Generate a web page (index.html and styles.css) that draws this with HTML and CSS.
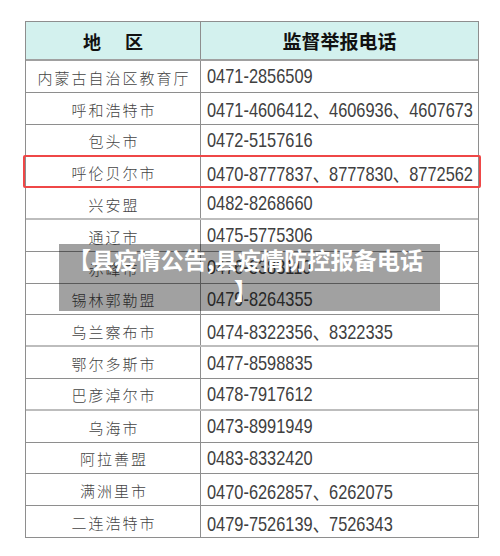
FILE: index.html
```html
<!DOCTYPE html>
<html lang="zh-CN">
<head>
<meta charset="utf-8">
<link rel="stylesheet" href="styles.css">
</head>
<body>
<div class="sheet">
  <div class="row head">
    <div class="cell area"><span class="h1">地　区</span></div>
    <div class="cell phone"><span class="h2">监督举报电话</span></div>
  </div>
  <div class="row"><div class="cell area">内蒙古自治区教育厅</div><div class="cell phone"><span class="num">0471-2856509</span></div></div>
  <div class="row"><div class="cell area">呼和浩特市</div><div class="cell phone"><span class="num">0471-4606412、4606936、4607673</span></div></div>
  <div class="row"><div class="cell area">包头市</div><div class="cell phone"><span class="num">0472-5157616</span></div></div>
  <div class="row mark"><div class="cell area">呼伦贝尔市</div><div class="cell phone"><span class="num">0470-8777837、8777830、8772562</span></div></div>
  <div class="row light"><div class="cell area">兴安盟</div><div class="cell phone"><span class="num">0482-8268660</span></div></div>
  <div class="row"><div class="cell area">通辽市</div><div class="cell phone"><span class="num">0475-5775306</span></div></div>
  <div class="row"><div class="cell area">赤峰市</div><div class="cell phone"><span class="num">0476-8383110</span></div></div>
  <div class="row"><div class="cell area">锡林郭勒盟</div><div class="cell phone"><span class="num">0479-8264355</span></div></div>
  <div class="row light"><div class="cell area">乌兰察布市</div><div class="cell phone"><span class="num">0474-8322356、8322335</span></div></div>
  <div class="row"><div class="cell area">鄂尔多斯市</div><div class="cell phone"><span class="num">0477-8598835</span></div></div>
  <div class="row light"><div class="cell area">巴彦淖尔市</div><div class="cell phone"><span class="num">0478-7917612</span></div></div>
  <div class="row"><div class="cell area">乌海市</div><div class="cell phone"><span class="num">0473-8991949</span></div></div>
  <div class="row"><div class="cell area">阿拉善盟</div><div class="cell phone"><span class="num">0483-8332420</span></div></div>
  <div class="row"><div class="cell area">满洲里市</div><div class="cell phone"><span class="num">0470-6262857、6262075</span></div></div>
  <div class="row last"><div class="cell area">二连浩特市</div><div class="cell phone"><span class="num">0479-7526139、7526343</span></div></div>
</div>
<div class="caption">【县疫情公告,县疫情防控报备电话<br>】</div>
</body>
</html>
```
FILE: styles.css
```css
html, body {
  margin: 0;
  padding: 0;
  background: #ffffff;
}
body {
  width: 500px;
  height: 556px;
  position: relative;
  overflow: hidden;
  font-family: "Noto Sans CJK SC", "Liberation Sans", sans-serif;
}
.sheet {
  margin: 21px 0 0 25px;
  width: 454px;
  box-sizing: border-box;
  border: 1px solid #8e8e8e;
  border-bottom: none;
  display: flex;
  flex-direction: column;
}
.row {
  display: grid;
  grid-template-columns: 175px 1fr;
  height: 31.8px;
  box-sizing: border-box;
  border-bottom: 1px solid #8e8e8e;
}
.row.light {
  border-bottom: 2px solid #bdbdbd;
}
.row.head {
  height: 39px;
  background: #d3f1ee;
  border-bottom: 2px solid #a0a0a0;
}
.cell {
  display: flex;
  align-items: center;
  min-width: 0;
}
.cell.area {
  justify-content: center;
  border-right: 1px solid #8e8e8e;
  font-size: 15px;
  font-weight: 300;
  letter-spacing: 2px;
  padding-left: 2px;
  color: #444;
  padding-top: 2px;
}
.cell.phone {
  padding-left: 6px;
}
.head .cell.area,
.head .cell.phone {
  justify-content: center;
  padding: 0;
}
.h1 {
  font-size: 18px;
  font-weight: 700;
  letter-spacing: 3px;
  padding-left: 3px;
  color: #111;
}
.h2 {
  font-size: 19px;
  font-weight: 700;
  color: #111;
}
.num {
  display: inline-block;
  font-family: "Liberation Sans", "Noto Sans CJK SC", sans-serif;
  font-size: 21px;
  color: #404040;
  white-space: nowrap;
  transform: scaleX(0.78);
  transform-origin: left center;
}
.row.mark {
  position: relative;
}
.row.mark::after {
  content: "";
  position: absolute;
  left: -3px;
  right: -3px;
  top: -1px;
  bottom: -1px;
  border: 2px solid #ef4747;
  border-radius: 2px;
}
.caption {
  position: absolute;
  left: 59px;
  top: 244px;
  width: 381px;
  height: 67px;
  box-sizing: border-box;
  padding: 0 10px 0 2px;
  background: rgba(0, 0, 0, 0.37);
  color: #ffffff;
  font-size: 23.2px;
  font-weight: 700;
  line-height: 31px;
  text-align: center;
  white-space: nowrap;
}
```
